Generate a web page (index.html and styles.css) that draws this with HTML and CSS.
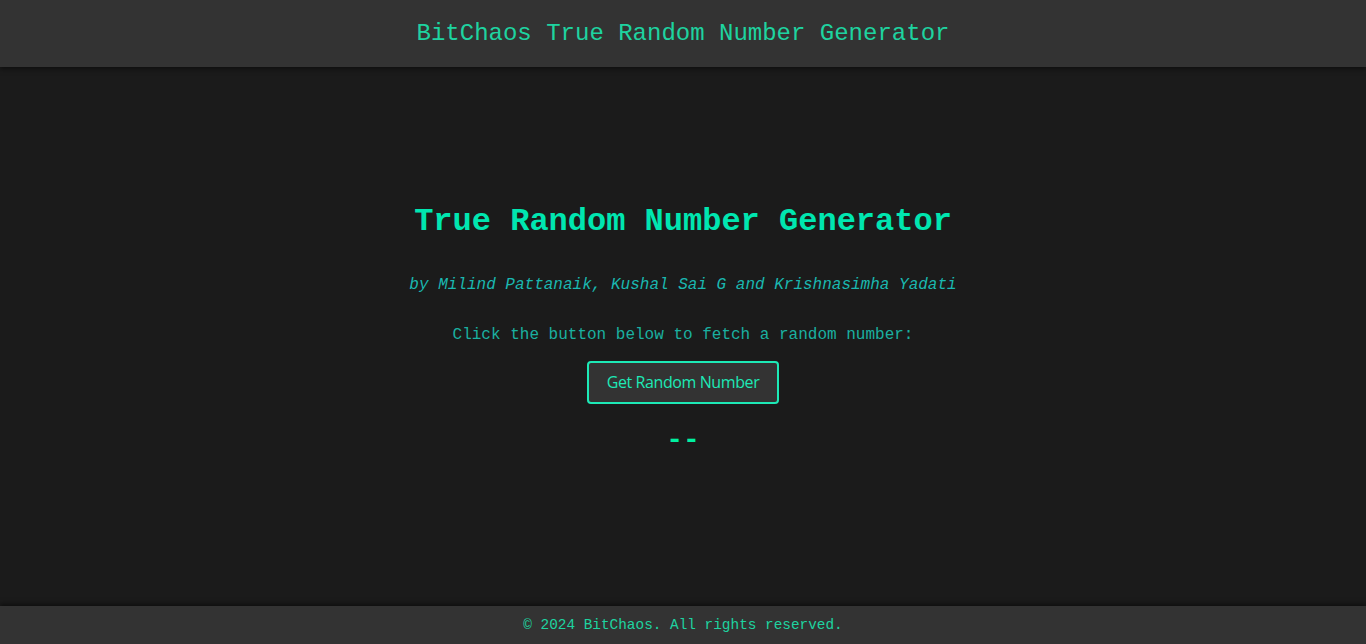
FILE: index.html
```html
<!DOCTYPE html>
<html lang="en">
<head>
<meta charset="utf-8">
<title>BitChaos True Random Number Generator</title>
<link rel="stylesheet" href="styles.css">
</head>
<body>
<header class="site-header">
  <div class="site-title">BitChaos True Random Number Generator</div>
</header>
<main class="main">
  <h1 class="heading">True Random Number Generator</h1>
  <p class="byline">by Milind Pattanaik, Kushal Sai G and Krishnasimha Yadati</p>
  <p class="prompt">Click the button below to fetch a random number:</p>
  <button class="fetch-btn" type="button">Get Random Number</button>
  <div class="result">--</div>
</main>
<footer class="site-footer">© 2024 BitChaos. All rights reserved.</footer>
</body>
</html>
```
FILE: styles.css
```css
html, body {
  margin: 0;
  padding: 0;
  height: 100%;
}
body {
  background: #1b1b1b;
  font-family: "Courier New", "Nimbus Mono PS", "FreeMono", "Liberation Mono", monospace;
  display: flex;
  flex-direction: column;
  min-height: 100vh;
}
.site-header {
  background: #333333;
  height: 67px;
  display: flex;
  align-items: center;
  justify-content: center;
  box-shadow: 0 2px 5px rgba(0, 0, 0, 0.5);
  position: relative;
  z-index: 1;
}
.site-title {
  color: #1ed3a0;
  font-size: 24px;
  line-height: 28px;
}
.main {
  flex: 1;
  display: flex;
  flex-direction: column;
  align-items: center;
  justify-content: center;
  padding-bottom: 12px;
}
.heading {
  margin: 0;
  color: #00e6b0;
  font-size: 32px;
  line-height: 33px;
  font-weight: bold;
  white-space: nowrap;
}
.byline {
  margin: 38px 0 0;
  color: #1ab8b0;
  font-style: italic;
  font-size: 16px;
  line-height: 18px;
}
.prompt {
  margin: 32px 0 0;
  color: #1ab0a0;
  font-size: 16px;
  line-height: 18px;
}
.fetch-btn {
  margin-top: 17px;
  height: 43px;
  width: 192px;
  padding: 0;
  background: #333333;
  color: #1de9b6;
  border: 2px solid #1de9b6;
  border-radius: 4px;
  font-family: "Open Sans", "DejaVu Sans", sans-serif;
  font-size: 16px;
  letter-spacing: -0.4px;
  cursor: pointer;
}
.result {
  margin-top: 20px;
  color: #00f0a0;
  font-size: 28px;
  line-height: 33px;
  font-weight: bold;
}
.site-footer {
  background: #333333;
  height: 38px;
  display: flex;
  align-items: center;
  justify-content: center;
  color: #1ed3a0;
  font-size: 14.4px;
  box-shadow: 0 -2px 5px rgba(0, 0, 0, 0.5);
}
```
